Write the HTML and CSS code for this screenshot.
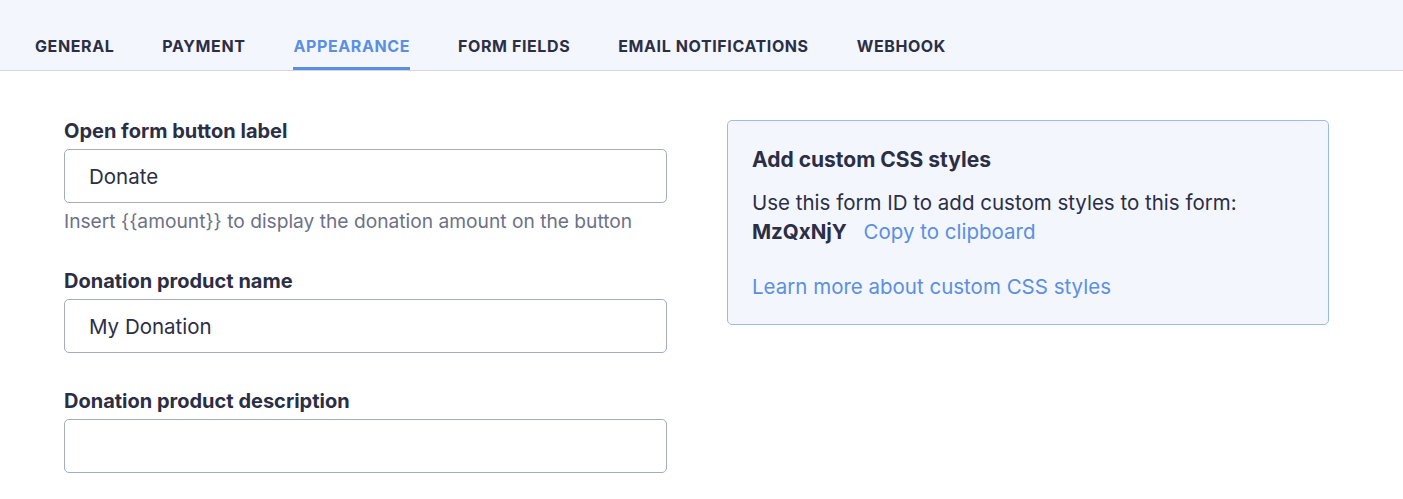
FILE: index.html
```html
<!DOCTYPE html>
<html lang="en">
<head>
  <meta charset="UTF-8">
  <meta name="viewport" content="width=device-width, initial-scale=1.0">
  <title>Form settings</title>
  <link rel="stylesheet" href="styles.css">
</head>
<body>
  <nav class="tabs">
    <a class="tab" href="#">General</a>
    <a class="tab" href="#">Payment</a>
    <a class="tab active" href="#">Appearance</a>
    <a class="tab" href="#">Form fields</a>
    <a class="tab" href="#">Email notifications</a>
    <a class="tab" href="#">Webhook</a>
  </nav>

  <main class="content">
    <form class="fields">
      <div class="field">
        <label class="field-label" for="button-label">Open form button label</label>
        <input class="field-input" id="button-label" type="text" value="Donate">
        <div class="field-help">Insert {{amount}} to display the donation amount on the button</div>
      </div>
      <div class="field">
        <label class="field-label" for="product-name">Donation product name</label>
        <input class="field-input" id="product-name" type="text" value="My Donation">
      </div>
      <div class="field">
        <label class="field-label" for="product-desc">Donation product description</label>
        <input class="field-input" id="product-desc" type="text" value="">
      </div>
    </form>

    <aside class="css-card">
      <h3 class="css-card-title">Add custom CSS styles</h3>
      <p class="css-card-text">
        Use this form ID to add custom styles to this form:<br>
        <strong class="form-id">MzQxNjY</strong>
        <a class="link" href="#">Copy to clipboard</a>
      </p>
      <a class="link learn-more" href="#">Learn more about custom CSS styles</a>
    </aside>
  </main>
</body>
</html>
```

FILE: styles.css
```css
html {
  box-sizing: border-box;
}
*, *:before, *:after {
  box-sizing: inherit;
}
body {
  margin: 0;
  padding: 0;
  background: #fff;
  color: #2b2e45;
  font-family: Inter, "Noto Sans", sans-serif;
  -webkit-font-smoothing: antialiased;
}

.tabs {
  display: flex;
  gap: 48px;
  height: 71px;
  padding: 0 35px;
  background: #f3f6fd;
  border-bottom: 1px solid #d3d6dd;
}

.tab {
  display: flex;
  align-items: center;
  height: 70px;
  padding-top: 25px;
  border-bottom: 3px solid transparent;
  margin-bottom: -1px;
  color: #2b2e45;
  font-size: 16px;
  font-weight: 700;
  letter-spacing: 0.6px;
  text-transform: uppercase;
  text-decoration: none;
}

.tab.active {
  color: #5b8fe3;
  border-bottom-color: #5b8fe3;
}

.content {
  display: flex;
  align-items: flex-start;
  gap: 60px;
  padding: 48px 64px;
}

.fields {
  width: 603px;
  display: flex;
  flex-direction: column;
  gap: 36px;
}

.field {
  display: flex;
  flex-direction: column;
}

.field-label {
  font-size: 20px;
  line-height: 24px;
  font-weight: 700;
  margin-bottom: 6px;
}

.field-input {
  height: 54px;
  padding: 0 24px;
  border: 1px solid #a7abc0;
  border-radius: 5px;
  background: #fff;
  color: #2b2e45;
  font-family: inherit;
  font-size: 20.5px;
  outline: none;
}

.field-help {
  margin-top: 6px;
  font-size: 19.2px;
  line-height: 24px;
  color: #6d7187;
}

.css-card {
  width: 602px;
  margin-top: 1px;
  padding: 27px 24px 23px;
  background: #f3f6fd;
  border: 1px solid #9ebbed;
  border-radius: 5px;
}

.css-card-title {
  margin: 0;
  font-size: 21px;
  line-height: 24px;
  font-weight: 700;
}

.css-card-text {
  margin: 16px 0 26px;
  font-size: 20.5px;
  line-height: 29px;
}

.form-id {
  margin-right: 11px;
}

.link {
  color: #5b8fe3;
  text-decoration: none;
}

.learn-more {
  display: block;
  font-size: 20.5px;
  line-height: 29px;
}
```
